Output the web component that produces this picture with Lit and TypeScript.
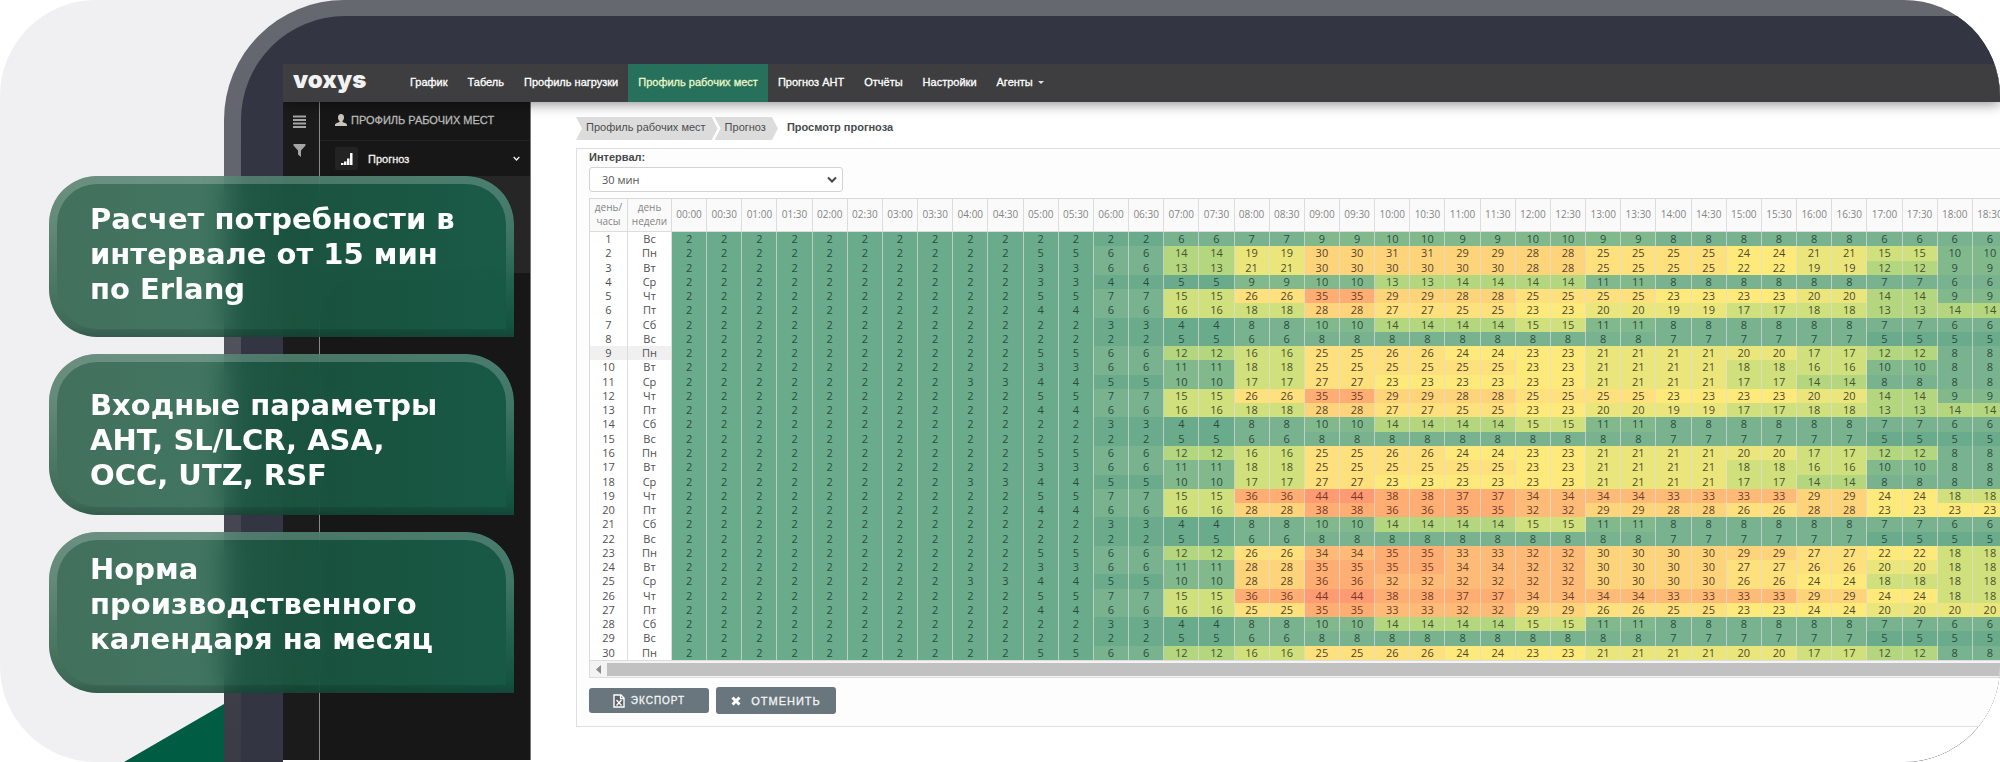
import { LitElement, html, css, svg } from "lit";
import { customElement } from "lit/decorators.js";
import { classMap } from "lit/directives/class-map.js";

const NAV = ["График", "Табель", "Профиль нагрузки", "Профиль рабочих мест", "Прогноз АНТ", "Отчёты", "Настройки", "Агенты"];
const ACTIVE = "Профиль рабочих мест";
const WEEK = ["Вс", "Пн", "Вт", "Ср", "Чт", "Пт", "Сб"];

// Hourly demand from 04:00 to 18:00; both half-hours of an hour share a value.
const SATURDAY = [2, 2, 3, 4, 8, 10, 14, 14, 15, 11, 8, 8, 8, 7, 6];
const SUNDAY = [2, 2, 2, 5, 6, 8, 8, 8, 8, 8, 7, 7, 7, 5, 5];
const MONDAY = [2, 5, 6, 12, 16, 25, 26, 24, 23, 21, 21, 20, 17, 12, 8];
const TUESDAY = [2, 3, 6, 11, 18, 25, 25, 25, 23, 21, 21, 18, 16, 10, 8];
const WEDNESDAY = [3, 4, 5, 10, 17, 27, 23, 23, 23, 21, 21, 17, 14, 8, 8];
const THURSDAY = [2, 5, 7, 15, 26, 35, 29, 28, 25, 25, 23, 23, 20, 14, 9];
const FRIDAY = [2, 4, 6, 16, 18, 28, 27, 25, 23, 20, 19, 17, 18, 13, 14];
const PEAK_THURSDAY = [2, 5, 7, 15, 36, 44, 38, 37, 34, 34, 33, 33, 29, 24, 18];

const MONTH: number[][] = [
  [2, 2, 2, 6, 7, 9, 10, 9, 10, 9, 8, 8, 8, 6, 6],
  [2, 5, 6, 14, 19, 30, 31, 29, 28, 25, 25, 24, 21, 15, 10],
  [2, 3, 6, 13, 21, 30, 30, 30, 28, 25, 25, 22, 19, 12, 9],
  [2, 3, 4, 5, 9, 10, 13, 14, 14, 11, 8, 8, 8, 7, 6],
  THURSDAY, FRIDAY, SATURDAY, SUNDAY,
  MONDAY, TUESDAY, WEDNESDAY, THURSDAY, FRIDAY, SATURDAY, SUNDAY,
  MONDAY, TUESDAY, WEDNESDAY, PEAK_THURSDAY,
  [2, 4, 6, 16, 28, 38, 36, 35, 32, 29, 28, 26, 28, 23, 23],
  SATURDAY, SUNDAY,
  [2, 5, 6, 12, 26, 34, 35, 33, 32, 30, 30, 29, 27, 22, 18],
  [2, 3, 6, 11, 28, 35, 35, 34, 32, 30, 30, 27, 26, 20, 18],
  [3, 4, 5, 10, 28, 36, 32, 32, 32, 30, 30, 26, 24, 18, 18],
  PEAK_THURSDAY,
  [2, 4, 6, 16, 25, 35, 33, 32, 29, 26, 25, 23, 24, 20, 20],
  SATURDAY, SUNDAY, MONDAY,
];

const SCALE: [number, string][] = [
  [5, "s0"], [8, "s1"], [11, "s2"], [14, "s3"], [18, "s4"], [21, "s5"],
  [24, "s6"], [27, "s7"], [31, "s8"], [34, "s9"], [38, "s10"], [99, "s11"],
];
const shade = (v: number) => SCALE.find(([max]) => v <= max)![1];

const slots = Array.from({ length: 38 }, (_, i) =>
  `${String(Math.floor(i / 2)).padStart(2, "0")}:${i % 2 ? "30" : "00"}`);

@customElement("feature-cards")
class FeatureCards extends LitElement {
  static styles = css`
    :host { display: grid; gap: 17px; }
    .card {
      position: relative;
      box-sizing: border-box;
      min-height: 161px;
      padding: 26px 30px 22px 41px;
      border-radius: 48px 48px 0 48px;
      background: linear-gradient(90deg, rgba(27, 83, 58, .82), rgba(24, 104, 80, .82));
      backdrop-filter: blur(14px);
      color: #fff;
      font: bold 29px/35px "DejaVu Sans", sans-serif;
    }
    .card::before {
      content: "";
      position: absolute;
      inset: 0;
      padding: 8px;
      border-radius: inherit;
      background: linear-gradient(rgba(255, 255, 255, .22), rgba(255, 255, 255, .18) 30%, rgba(255, 255, 255, .04) 70%, rgba(0, 0, 0, .06) 93%, rgba(0, 0, 0, .2));
      mask: linear-gradient(#000 0 0) content-box exclude, linear-gradient(#000 0 0);
    }
    .params { padding-top: 34px; padding-bottom: 14px; }
    .norm { padding-top: 20px; }
    p { margin: 0; }
  `;
  render() {
    return html`
      <section class="card"><p>Расчет потребности в<br>интервале от 15 мин<br>по Erlang</p></section>
      <section class="card params"><p>Входные параметры<br>AHT, SL/LCR, ASA,<br>OCC, UTZ, RSF</p></section>
      <section class="card norm"><p>Норма<br>производственного<br>календаря на месяц</p></section>`;
  }
}

@customElement("forecast-table")
class ForecastTable extends LitElement {
  static styles = css`
    :host { display: block; --cols: 38px 44px repeat(38, minmax(28px, 1fr)); }
    table, thead { display: block; }
    table { border-left: 1px solid #d9d9d9; border-top: 1px solid #d9d9d9; font: 11px/14px "Open Sans", "Noto Sans", sans-serif; }
    tr { display: grid; grid-template-columns: var(--cols); }
    tbody { display: grid; grid-auto-rows: 1fr; min-height: 428px; }
    th, td { box-sizing: border-box; min-width: 0; padding: 0; text-align: center; font-weight: 400; border-right: 1px solid #ddd; }
    thead th { display: flex; align-items: center; justify-content: center; min-height: 33px; padding-bottom: 2px; border-bottom: 1px solid #ddd; background: #fafafa; color: #858585; font-size: 10px; }
    tbody th, .week { color: #505050; background: #fff; }
    .current th, .current .week { background: #f0f0f0; }
    .value { border-right-color: rgba(221, 221, 221, .7); color: #2c4c3b; }
    .s0 { background: #69ab8b; }
    .s1 { background: #79b28f; }
    .s2 { background: #82b98c; }
    .s3 { background: #b4d67e; color: #47532f; }
    .s4 { background: #cfe07c; color: #4c4f2e; }
    .s5 { background: #ebe67c; color: #4f4b2c; }
    .s6 { background: #feea7b; color: #4f482c; }
    .s7 { background: #fee07c; color: #4f432c; }
    .s8 { background: #fed47b; color: #57432b; }
    .s9 { background: #febb77; color: #6a4229; }
    .s10 { background: #fead73; color: #703b28; }
    .s11 { background: #fe9b72; color: #7a3627; }
    .scroll { display: flex; align-items: center; height: 16px; border: solid #ddd; border-width: 1px 0 1px 1px; background: #f3f3f3; }
    .scroll svg { width: 17px; height: 9px; }
    .thumb { flex: 1; height: 13px; background: #c1c1c1; }
  `;
  render() {
    return html`
      <table aria-label="Прогноз">
        <thead><tr>
          <th scope="col">день/<br>часы</th><th scope="col">день<br>недели</th>
          ${slots.map((s) => html`<th scope="col">${s}</th>`)}
        </tr></thead>
        <tbody>
          ${MONTH.map((hours, i) => html`
            <tr class=${classMap({ current: i === 8 })}>
              <th scope="row">${i + 1}</th><td class="week">${WEEK[i % 7]}</td>
              ${slots.map((_, k) => {
                const hour = Math.floor(k / 2);
                const v = hour < 4 ? 2 : hours[hour - 4];
                return html`<td class="value ${shade(v)}">${v}</td>`;
              })}
            </tr>`)}
        </tbody>
      </table>
      <div class="scroll"><svg viewBox="0 0 17 9"><path d="M11 0v9L6 4.500z" fill="#8b8b8b"/></svg><div class="thumb"></div></div>`;
  }
}

const chevron = svg`<path d="M1 1.500l4 4 4-4" fill="none" stroke="currentColor" stroke-width="2"/>`;

@customElement("app-root")
class AppRoot extends LitElement {
  static styles = css`
    :host { display: block; background: #fff; font: 11px/16px "Liberation Sans", Arial, sans-serif; }
    a { color: inherit; text-decoration: none; }
    .stage { position: relative; display: flex; min-height: 100vh; padding-left: 224px; box-sizing: border-box; clip-path: inset(0 round 96px); background: #f0f0f2; }
    .wedge { position: absolute; left: 124px; bottom: 0; width: 100px; height: 58px; fill: #005c43; }
    .cards { position: absolute; left: 49px; top: 176px; width: 465px; }
    .bezel { flex: 1; min-width: 0; display: flex; padding: 16px 0 0 17px; border-radius: 120px 0 0 0; background: linear-gradient(#666870, #62646d 25%, #4c4d58 50%, #3a3b45); }
    .body { flex: 1; min-width: 0; display: flex; padding: 48px 0 0 42px; border-radius: 104px 0 0 0; background: #343542; }
    .screen { flex: 1; min-width: 0; display: flex; flex-direction: column; overflow: hidden; background: #fff; }

    header { position: relative; display: flex; align-items: stretch; min-height: 38px; padding-left: 10px; background: #3e3e40; color: #fff; box-shadow: 0 1px 14px rgba(0, 0, 0, .5); }
    .logo { width: 107px; font: 900 24px/32px Inter, sans-serif; color: #f2f2f2; }
    nav { display: flex; }
    nav a { display: flex; align-items: center; gap: 5px; padding: 0 10px 2px; -webkit-text-stroke: .3px; }
    nav .active { background: #26705c; color: #eaf7c8; }
    nav svg { width: 6px; height: 3px; }

    .main { flex: 1; display: flex; margin-bottom: 2px; min-width: 0; }
    .rail { display: flex; flex-direction: column; align-items: center; gap: 16px; width: 36px; padding-top: 13px; border-right: 1px solid #8a8a8a; background: #1b1b1b; color: #a5a5a5; }
    .rail button { display: block; padding: 0 3px 0 0; border: 0; background: none; color: inherit; line-height: 0; }
    .rail svg { width: 13px; height: 13px; }
    aside { width: 210px; border-right: 1px solid #777; background: #171717; color: #e8e8e8; }
    .title { display: flex; align-items: center; gap: 4px; height: 36px; margin: 0; padding: 0 0 2px 15px; border-bottom: 1px solid #222; font: 11px/16px "Liberation Sans", Arial, sans-serif; color: #b8b8b8; -webkit-text-stroke: .3px; }
    .title svg { width: 12px; height: 12px; }
    .entry { display: flex; align-items: center; width: 100%; height: 35px; padding: 0 10px 0 15px; border: 0; background: none; color: #f2f2f2; font: inherit; -webkit-text-stroke: .3px; }
    .tile { display: grid; place-items: center; width: 23px; height: 23px; margin-right: 10px; border-radius: 2px; background: #232323; }
    .tile svg { width: 12px; height: 12px; }
    .arrow { width: 7px; height: 5px; margin-left: auto; }
    .submenu { height: 97px; background: #262626; }

    .content { flex: 1; min-width: 0; padding: 15px 0 30px 45px; }
    .crumbs { display: flex; align-items: center; margin: 0 0 8px; padding: 0; list-style: none; color: #4d4d4d; line-height: 21px; }
    .crumbs a { display: block; padding: 0 12px 2px 10px; background: #dcdcdc; clip-path: polygon(0 0, calc(100% - 6px) 0, 100% 50%, calc(100% - 6px) 100%, 0 100%, 6px 50%); }
    .crumbs li + li { margin-left: -3px; }
    .crumbs .here { margin-left: 9px; padding-bottom: 2px; font-weight: bold; color: #474b4e; }
    .panel { border: 1px solid #dfdfdf; border-right: 0; padding: 0 0 12px 12px; background: #fdfdfd; }
    label { display: block; padding-bottom: 2px; font-weight: bold; color: #46494b; }
    .pick { display: block; position: relative; width: 254px; margin-bottom: 6px; color: #444; }
    select { appearance: none; display: block; width: 100%; height: 25px; padding: 0 12px; border: 1px solid #d3d3d3; border-radius: 3px; background: #fff; color: #555; font: 11px/16px "Open Sans", "Noto Sans", sans-serif; }
    .pick svg { position: absolute; right: 6px; top: 9px; width: 10px; height: 7px; }
    .wide { display: block; margin-right: -8px; }
    .actions { display: flex; align-items: center; gap: 7px; margin-top: 9px; }
    .actions button { display: flex; align-items: center; justify-content: center; gap: 6px; width: 120px; height: 25px; padding: 0; border: 0; border-radius: 3px; background: #69767e; color: #f4f4f4; font: 10px/16px "Liberation Sans", Arial, sans-serif; letter-spacing: 1px; -webkit-text-stroke: .3px; }
    .actions .cancel { height: 27px; gap: 10px; font-size: 11px; }
    .actions svg { width: 12px; height: 14px; }
    .actions .cancel svg { width: 10px; height: 10px; }
  `;
  render() {
    return html`
      <div class="stage">
        <svg class="wedge" viewBox="0 0 100 58" preserveAspectRatio="none"><path d="M0 58L100 0v58z"/></svg>
        <div class="bezel"><div class="body"><div class="screen">
          <header>
            <a class="logo" href="#">voxys</a>
            <nav>
              ${NAV.map((n) => html`<a href="#" class=${classMap({ active: n === ACTIVE })}>${n}${n === "Агенты"
                ? html`<svg viewBox="0 0 6 3"><path d="M0 0h6L3 3z" fill="#ddd"/></svg>` : ""}</a>`)}
            </nav>
          </header>
          <div class="main">
            <div class="rail">
              <button aria-label="Меню"><svg viewBox="0 0 13 13"><path d="M0 1.500h13M0 5h13M0 8.500h13M0 12h13" stroke="currentColor" stroke-width="1.800"/></svg></button>
              <button aria-label="Фильтр"><svg viewBox="0 0 13 13"><path d="M.5 0h12v1.500L8 6.500V13L5 10.500v-4L.5 1.500z" fill="currentColor"/></svg></button>
            </div>
            <aside>
              <h1 class="title"><svg viewBox="0 0 12 12"><path d="M6 0c2 0 3 1.400 3 3.400C9 5 8.300 6.200 7.500 7v1c1.500.6 4.500 1.200 4.500 3v1H0v-1c0-1.800 3-2.400 4.500-3V7C3.700 6.200 3 5 3 3.400 3 1.400 4 0 6 0z" fill="#c9c4bd"/></svg>ПРОФИЛЬ РАБОЧИХ МЕСТ</h1>
              <button class="entry">
                <span class="tile"><svg viewBox="0 0 12 12"><path d="M0 10h2.500v2H0zM3 8.500h2.500V12H3zM6 5.500h2.500V12H6zM9 0h2.500v12H9z" fill="#fff"/></svg></span>
                Прогноз
                <svg class="arrow" viewBox="0 0 10 7">${chevron}</svg>
              </button>
              <div class="submenu"></div>
            </aside>
            <main class="content">
              <ol class="crumbs">
                <li><a href="#">Профиль рабочих мест</a></li>
                <li><a href="#">Прогноз</a></li>
                <li class="here">Просмотр прогноза</li>
              </ol>
              <div class="panel">
                <label for="interval">Интервал:</label>
                <span class="pick">
                  <select id="interval"><option>30 мин</option></select>
                  <svg viewBox="0 0 10 7">${chevron}</svg>
                </span>
                <forecast-table class="wide"></forecast-table>
                <div class="actions">
                  <button><svg viewBox="0 0 12 14"><path d="M1 1h7l3 3v9H1z" fill="#5d6068" stroke="#fff" stroke-width="1.400"/><path d="M7.500 1v3.500H11M3.500 6l5 5.500M8.500 6l-5 5.500" stroke="#fff" stroke-width="1.300" fill="none"/></svg>ЭКСПОРТ</button>
                  <button class="cancel"><svg viewBox="0 0 10 10"><path d="M1.500 1.500l7 7M8.500 1.500l-7 7" stroke="#fff" stroke-width="3"/></svg>ОТМЕНИТЬ</button>
                </div>
              </div>
            </main>
          </div>
        </div></div></div>
        <feature-cards class="cards"></feature-cards>
      </div>`;
  }
}
